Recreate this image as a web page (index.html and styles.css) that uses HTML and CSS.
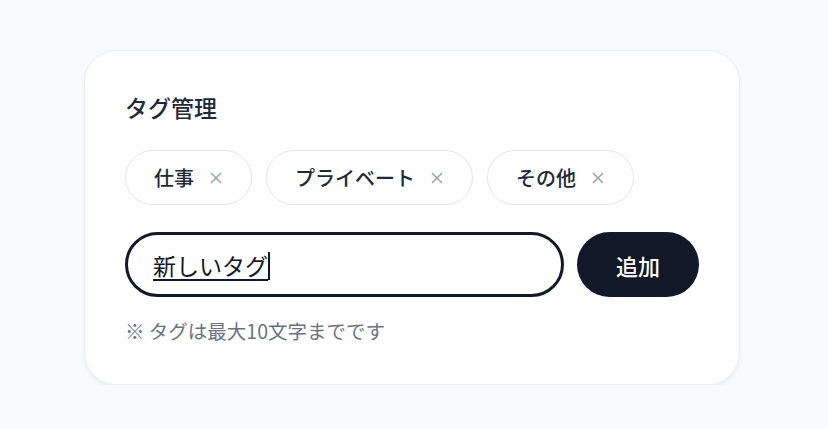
FILE: index.html
```html
<!DOCTYPE html>
<html lang="ja">
<head>
  <meta charset="UTF-8" />
  <meta name="viewport" content="width=device-width, initial-scale=1.0" />
  <title>タグ管理</title>
  <link rel="stylesheet" href="styles.css">
</head>
<body>

  <div class="card">
    <!-- Title -->
    <h2 class="title">タグ管理</h2>

    <!-- Tag list -->
    <div class="tags">
      <span class="tag">仕事
        <svg class="remove" viewBox="0 0 14 14"><path d="M2 2L12 12M12 2L2 12" /></svg>
      </span>
      <span class="tag">プライベート
        <svg class="remove" viewBox="0 0 14 14"><path d="M2 2L12 12M12 2L2 12" /></svg>
      </span>
      <span class="tag">その他
        <svg class="remove" viewBox="0 0 14 14"><path d="M2 2L12 12M12 2L2 12" /></svg>
      </span>
    </div>

    <!-- Input row -->
    <div class="add-row">
      <div class="tag-input">
        <span class="composing">新しいタグ</span><span class="caret"></span>
      </div>
      <button class="add-btn">追加</button>
    </div>

    <p class="hint">※ タグは最大10文字までです</p>
  </div>

</body>
</html>
```

FILE: styles.css
```css
body {
  margin: 0;
  padding: 0;
  background-color: #f9fafb;
  font-family: "Noto Sans CJK JP", "Noto Sans", sans-serif;
  color: #1f2937;
}

.card {
  box-sizing: border-box;
  width: 656px;
  margin: 50px 0 0 84px;
  padding: 40px;
  background-color: #ffffff;
  border: 1px solid #eceef1;
  border-radius: 32px;
  box-shadow: 0 2px 4px rgba(17, 24, 39, 0.06);
}

.title {
  margin: 0;
  font-size: 23px;
  font-weight: 500;
  line-height: 32px;
  color: #1f2937;
}

.tags {
  display: flex;
  gap: 14px;
  margin-top: 27px;
}

.tag {
  box-sizing: border-box;
  display: inline-flex;
  align-items: center;
  gap: 15px;
  height: 55px;
  padding: 0 28px;
  border: 1.5px solid #e3e5e9;
  border-radius: 999px;
  font-size: 20px;
  font-weight: 500;
  color: #1f2937;
}

.tag .remove {
  width: 14px;
  height: 14px;
  stroke: #9ca3af;
  stroke-width: 1.6;
  fill: none;
}

.add-row {
  display: flex;
  gap: 13px;
  margin-top: 27px;
}

.tag-input {
  box-sizing: border-box;
  flex: 1;
  display: flex;
  align-items: center;
  height: 65px;
  padding: 0 25px;
  border: 3px solid #111827;
  border-radius: 999px;
  font-size: 23px;
  color: #111827;
}

.composing {
  text-decoration: underline;
  text-decoration-thickness: 1.5px;
  text-underline-offset: 4px;
}

.caret {
  display: inline-block;
  width: 1.5px;
  height: 28px;
  margin-top: 2px;
  background-color: #111827;
}

.add-btn {
  width: 122px;
  height: 65px;
  border: none;
  border-radius: 999px;
  background-color: #111827;
  color: #ffffff;
  font-family: inherit;
  font-size: 22px;
  font-weight: 500;
  cursor: pointer;
}

.hint {
  margin: 20px 0 0;
  font-size: 19.5px;
  line-height: 27px;
  color: #6b7280;
}
```
